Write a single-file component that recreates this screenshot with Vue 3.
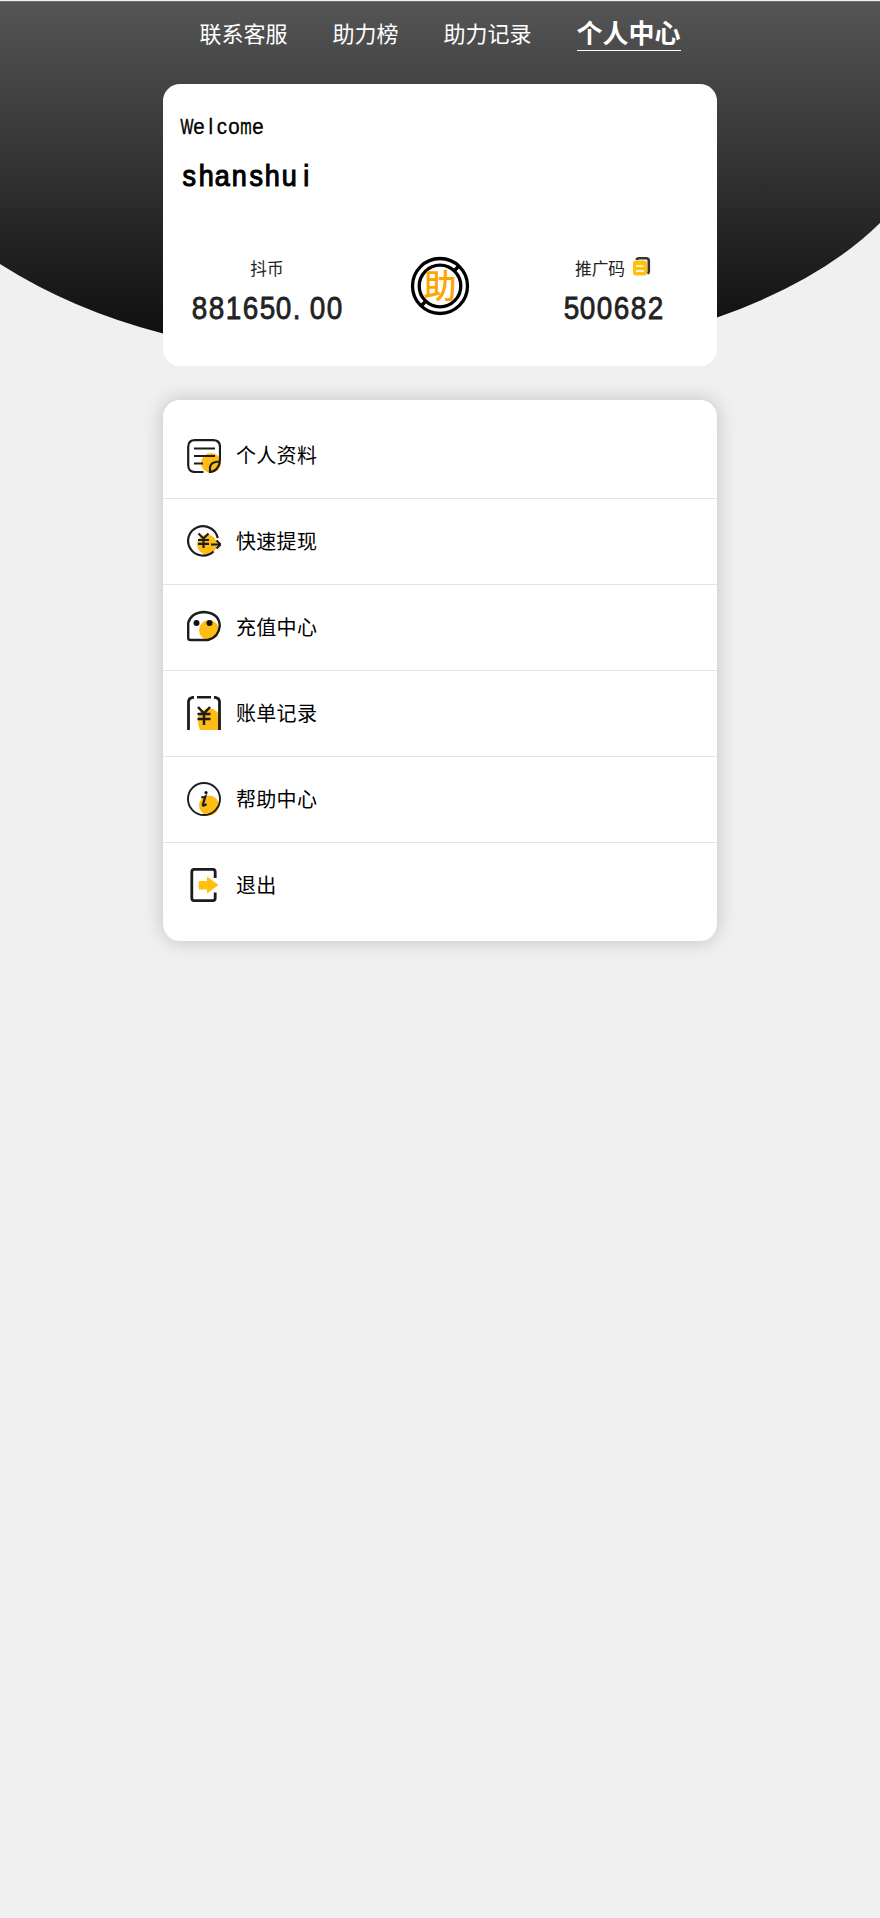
<script setup>
const nav = ['联系客服', '助力榜', '助力记录', '个人中心']
const menu = [
  { icon: 'profile', label: '个人资料' },
  { icon: 'withdraw', label: '快速提现' },
  { icon: 'recharge', label: '充值中心' },
  { icon: 'bill', label: '账单记录' },
  { icon: 'help', label: '帮助中心' },
  { icon: 'exit', label: '退出' },
]
const cells = (s) => s.split('')
</script>

<template>
  <div class="page">
    <svg class="backdrop" width="880" height="350" viewBox="0 0 880 350">
      <defs>
        <linearGradient id="dark" gradientUnits="userSpaceOnUse" x1="0" y1="1" x2="0" y2="351">
          <stop offset="0" stop-color="#555" />
          <stop offset="1" stop-color="#0c0c0c" />
        </linearGradient>
      </defs>
      <path d="M0 1H880V223Q821 281 717 317.500L600 340H180L163 333.500Q72 310 0 264Z" fill="url(#dark)" />
      <path d="M0 1.500H880" stroke="#6d716f" />
    </svg>

    <nav class="nav">
      <span v-for="(n, i) in nav" :key="n" :class="{ active: i === 3 }"><em>{{ n }}</em></span>
    </nav>

    <main class="content">
      <section class="card account">
        <div class="welcome mono"><i v-for="(c, i) in cells('Welcome')" :key="i" :class="{ wide: c === 'W' || c === 'm' }">{{ c }}</i></div>
        <div class="user mono"><i v-for="(c, i) in cells('shanshui')" :key="i">{{ c }}</i></div>
        <div class="stats">
          <div class="stat coins">
            <div class="label">抖币</div>
            <div class="num mono"><i v-for="(c, i) in cells('881650.00')" :key="i" :class="{ dot: c === '.' }">{{ c }}</i></div>
          </div>
          <div class="coin">
            <svg width="60" height="60" viewBox="0 0 60 60" fill="none" stroke="#000">
              <circle cx="30" cy="30" r="27.500" stroke-width="3.300" />
              <circle cx="30" cy="30" r="20.800" stroke-width="3.300" />
              <path d="M43.500 15.500L48.500 10.500M11.500 49.500L16.500 44.500" stroke-width="3.600" />
            </svg>
            <b>助</b>
          </div>
          <div class="stat code">
            <div class="label">推广码
              <svg class="copy" width="18" height="19" viewBox="0 0 18 19">
                <path d="M4 3V1.800Q5 1.300 6 1.300H13Q15.800 1.300 15.800 4V14.500Q15.800 16 14.500 16.500" fill="none" stroke="#333" stroke-width="2.600" />
                <rect x="0" y="3.500" width="14" height="15" rx="3" fill="#ffc10d" />
                <path d="M3 9H10.500M3 14H11" stroke="#fff3c4" stroke-width="1.800" />
              </svg>
            </div>
            <div class="num mono"><i v-for="(c, i) in cells('500682')" :key="i">{{ c }}</i></div>
          </div>
        </div>
      </section>

      <section class="card menu">
        <div v-for="m in menu" :key="m.icon" class="row">
          <svg width="34" height="34" viewBox="0 0 34 34" fill="none" stroke="#1c1c1c" stroke-width="2.200">
            <template v-if="m.icon === 'profile'">
              <circle cx="24" cy="24" r="10" fill="#ffbc14" stroke="none" />
              <path d="M16.500 33H8Q1.200 33 1.200 26V8Q1.200 1.200 8 1.200H26Q33 1.200 33 8V22.500" />
              <path d="M33 22.500Q24 22.500 23 28V33Q31 32.500 33 22.500" />
              <path d="M7 9.500H28M7 17H28M7 24.500H16" />
            </template>
            <template v-else-if="m.icon === 'withdraw'">
              <circle cx="20" cy="20.500" r="10" fill="#ffbc14" stroke="none" />
              <path d="M30.800 14A15 14.700 0 1 0 26.500 27.500M24 20.500H33M29.500 16.500L33.500 20.500L29.500 24.500" />
              <path d="M11.500 9.500L16.500 14.500L21.500 9.500M16.500 14.500V24M11 16H22M11 19.800H22" />
            </template>
            <template v-else-if="m.icon === 'recharge'">
              <circle cx="22" cy="20" r="10" fill="#ffbc14" stroke="none" />
              <path d="M1.200 28V13Q4 2.500 17 2Q32 3 32.800 15.500Q32 27 21 30H3.500Q1.200 30 1.200 28Z" stroke-width="2.400" />
              <circle cx="9.500" cy="13" r="3" fill="#111" stroke="none" />
              <circle cx="22.500" cy="13" r="3" fill="#111" stroke="none" />
            </template>
            <template v-else-if="m.icon === 'bill'">
              <path d="M11 25a11 11 0 0 1 21-6V34H13Q11 30 11 25Z" fill="#ffbc14" stroke="none" />
              <path d="M1.500 34V6Q1.500 1.500 7 1.300M10 1H24M27 1.300Q32.500 1.500 32.500 6V34" stroke-width="2.800" />
              <path d="M11 11L17 17.500L23 11M17 17.500V29M10.500 18H23.500M10.500 23H23.500" stroke-width="2.500" />
            </template>
            <template v-else-if="m.icon === 'help'">
              <circle cx="22" cy="23.500" r="10" fill="#ffbc14" stroke="none" />
              <circle cx="17" cy="17" r="16" stroke-width="1.900" />
              <circle cx="19" cy="10.500" r="1.600" fill="#111" stroke="none" />
              <path d="M14.300 15.200Q17 15.500 18.300 14.500L15.800 23Q16.500 24.500 19.500 22" />
            </template>
            <template v-else>
              <path d="M28.200 10V4Q28.200 1.300 25.500 1.300H7.500Q4.800 1.300 4.800 4V30Q4.800 32.700 7.500 32.700H25.500Q28.200 32.700 28.200 30V24.500" stroke-width="2.800" />
              <path d="M12 13H20V8.500L31.500 17L20 25.500V21.500H12Q11 17 12 13Z" fill="#ffc10d" stroke="none" />
            </template>
          </svg>
          <span>{{ m.label }}</span>
        </div>
      </section>
    </main>
  </div>
</template>

<style>
html, body { background: #f0f0f0; }
</style>

<style scoped>
.page {
  position: relative;
  min-height: 1918px;
  background: #f0f0f0;
  font-family: "Noto Sans CJK SC", sans-serif;
  color: #000;
}
.backdrop { position: absolute; top: 0; left: 0; }
.nav {
  position: relative;
  display: flex;
  justify-content: center;
  align-items: flex-end;
  gap: 45px;
  height: 51px;
  color: #fff;
  font-size: 22px;
  line-height: 32px;
}
.nav em { font-style: normal; display: block; margin-bottom: 3px; }
.nav .active {
  font-size: 26px;
  font-weight: 700;
  border-bottom: 1px solid #fff;
}
.nav .active em { margin-bottom: 2px; }
.content { position: relative; width: 554px; margin: 33px auto 0; }
.card { background: #fff; border-radius: 17px; box-sizing: border-box; }
.mono { display: flex; font-family: "Liberation Sans", sans-serif; }
.mono i { display: flex; justify-content: center; font-style: normal; flex: none; }
.account { height: 282px; padding: 27px 18px 0; }
.welcome { font-size: 22px; line-height: 32px; }
.welcome i { width: 11.8px; -webkit-text-stroke: 0.3px #000; transform: scaleX(0.93); }
.welcome .wide { transform: scaleX(0.62); -webkit-text-stroke: 0.7px #000; }
.user { font-size: 29px; line-height: 40px; margin-top: 13px; }
.user i { width: 16.7px; -webkit-text-stroke: 1.1px #000; transform: scaleX(0.93); }
.stats { display: flex; justify-content: space-between; margin-top: 60px; }
.stat {
  box-sizing: border-box;
  width: 170px;
  display: flex;
  flex-direction: column;
  align-items: center;
  color: #222;
}
.coins { padding-left: 2px; }
.code { padding-right: 2px; }
.label { font-size: 16.7px; line-height: 24px; display: flex; gap: 8px; }
.copy { margin-top: 1px; }
.num { font-size: 31px; line-height: 42px; margin-top: 8px; }
.num i { width: 16.8px; -webkit-text-stroke: 0.8px #222; transform: scaleX(0.9); }
.num .dot { justify-content: flex-start; }
.coin { position: relative; width: 60px; height: 60px; }
.coin b {
  position: absolute;
  inset: 0;
  text-align: center;
  font-weight: 500;
  font-size: 33px;
  line-height: 56px;
  color: #ffa500;
}
.menu {
  height: 541px;
  margin-top: 34px;
  padding-top: 13px;
  box-shadow: 0 0 20px rgba(0, 0, 0, 0.2);
}
.row {
  display: flex;
  align-items: center;
  gap: 15px;
  height: 86px;
  box-sizing: border-box;
  padding: 0 0 1px 24px;
  border-bottom: 1px solid #e4e4e4;
  font-size: 20px;
  letter-spacing: 0.3px;
}
.row:first-child svg { margin-top: 2px; }
.row span { padding-bottom: 2px; }
.row:last-child { border-bottom-color: transparent; }
</style>
